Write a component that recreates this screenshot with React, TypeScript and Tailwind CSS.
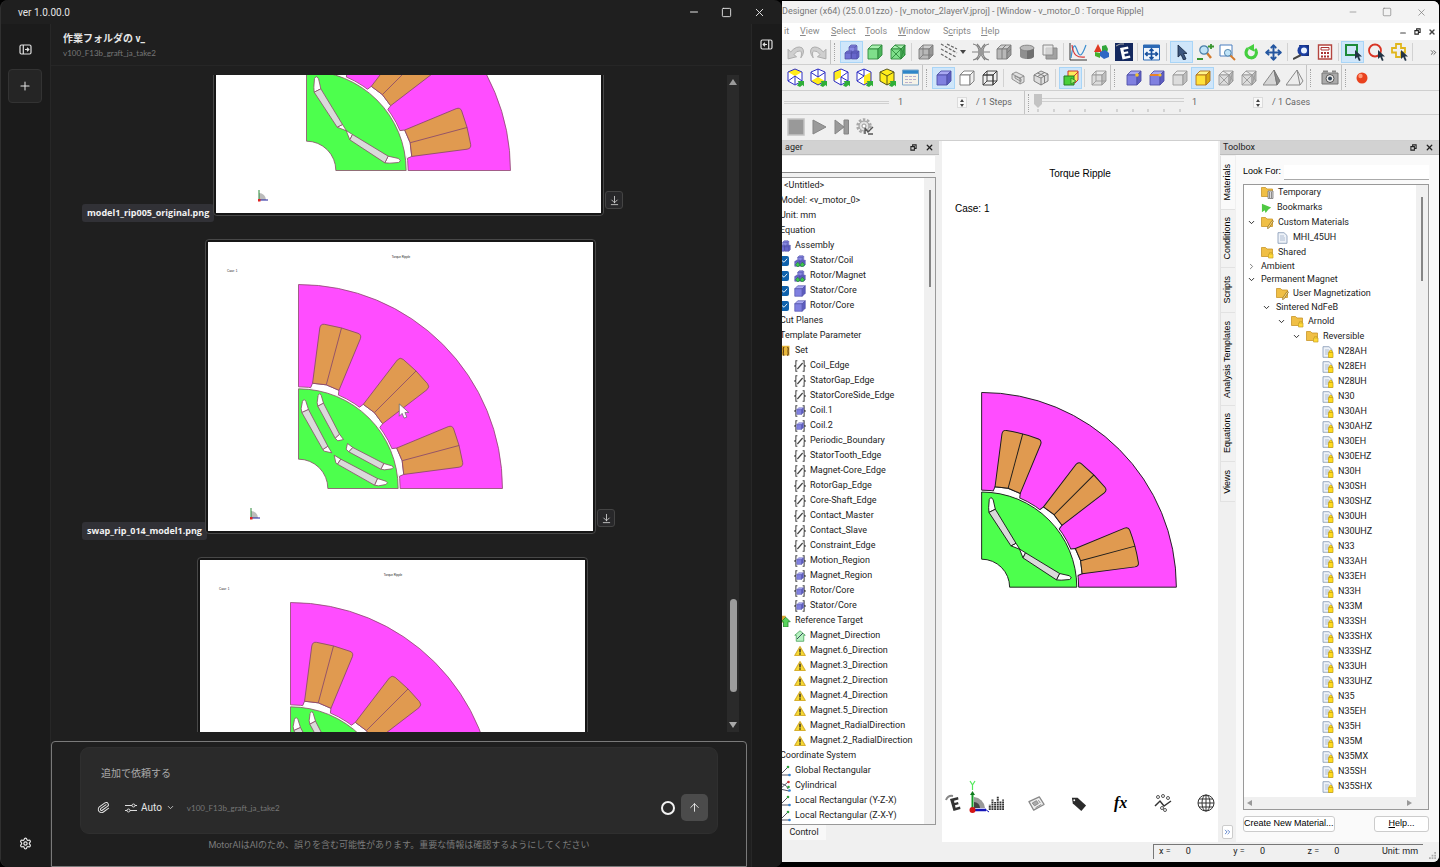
import React from "react";
import {
  ArrowDownToLine,
  ArrowUp,
  ChevronDown,
  ChevronRight,
  ChevronsRight,
  Minus,
  Move,
  Paperclip,
  Plus,
  Settings,
  Square,
  X,
} from "lucide-react";

type Kids = { children?: React.ReactNode };

/* ---------- motor cross section ---------- */

const SLOT_ANGLES = [-15, -45, -75];

const SINGLE_LAYER = [
  { magnet: "23,-235 43,-245 108,-138 92,-130", top: "23,-235 22,-250 24,-276 29,-282 36,-276 43,-245", tip: "108,-138 120,-119 92,-130" },
];

const DOUBLE_LAYER = [
  { magnet: "10,-228 30,-237 88,-127 73,-117", top: "10,-228 8,-240 12,-262 17,-267 22,-262 30,-237", tip: "88,-127 100,-107 77,-112 73,-117" },
  { magnet: "58,-247 75,-256 123,-163 110,-151", top: "58,-247 56,-258 59,-280 64,-285 68,-280 75,-256", tip: "123,-163 135,-147 118,-143 110,-151" },
];

function Motor({ double = false, line, weight = 3 }: { double?: boolean; line: string; weight?: number }) {
  const layers = double ? DOUBLE_LAYER : SINGLE_LAYER;
  const thin = { stroke: line, strokeWidth: weight, strokeLinejoin: "round" as const };
  return (
    <g>
      <path d="M0-612A612 612 0 0 1 612 0H305A305 305 0 0 0 0-305Z" fill="#ff4dff" {...thin} />
      {SLOT_ANGLES.map((a) => (
        <g key={a} transform={`rotate(${a})`}>
          <path d="M300-43L316-41L322 0L316 41L300 43Z" fill="#fff" />
          <path d="M302-43L316-41L322 0L316 41L302 43" fill="none" {...thin} />
          <path d="M316-41L482-63Q495-64 496-52A499 499 0 0 1 496 52Q495 64 482 63L316 41L322 0Z" fill="#e09a50" {...thin} />
          <path d="M322 0H499" {...thin} />
        </g>
      ))}
      <path d="M0-299A299 299 0 0 1 299 0H88A88 88 0 0 0 0-88Z" fill="#4dff4d" {...thin} />
      {["", "matrix(0 -1 -1 0 0 0)"].map((t) => (
        <g key={t} transform={t || undefined} {...thin}>
          {layers.map((l) => (
            <g key={l.magnet}>
              <polygon points={l.top} fill="#fff" />
              <polygon points={l.tip} fill="#fff" />
              <polygon points={l.magnet} fill="#dadada" />
            </g>
          ))}
        </g>
      ))}
    </g>
  );
}

function Plot({ double = false, captions = true }: { double?: boolean; captions?: boolean }) {
  return (
    <svg viewBox="0 0 385 289" className="block h-[289px] w-[385px] bg-white" role="img" aria-label="Motor cross section">
      {captions && (
        <g fontSize="3" fill="#222" fontFamily="Liberation Sans">
          <text x="193" y="16" textAnchor="middle">Torque Ripple</text>
          <text x="19" y="30">Case: 1</text>
        </g>
      )}
      <g transform="translate(90.5 246.5) scale(.3333)">
        <Motor double={double} line="#8a4a6a" weight={2.4} />
      </g>
      <g transform="translate(43 276)">
        <path d="M0 0V-7A7 7 0 0 1 7 0Z" fill="#bbb" />
        <path d="M0 0V-10" stroke="#2c8a3a" />
        <path d="M0 0H9" stroke="#1c1c9c" />
        <rect x="-1" y="-1" width="2.5" height="2.5" fill="#d22" />
      </g>
    </svg>
  );
}

/* ---------- left window ---------- */

function ImageMessage({ name, labelClass, double, captions, children }: { name?: string; labelClass: string; double?: boolean; captions?: boolean } & Kids) {
  return (
    <li className="flex items-end">
      <div className={`${labelClass} flex h-[18px] shrink-0 items-center`}>
        {name && (
          <span className="h-[18px] rounded-[3px] bg-[#313136] px-[5px] font-['Open_Sans'] text-[9px] font-bold leading-[18px] whitespace-nowrap text-[#f2f2f2]">{name}</span>
        )}
      </div>
      <div className="relative mb-[6px] shrink-0 rounded-[4px] border border-[#484848] bg-[#161616] p-[2px]">
        <Plot double={double} captions={captions} />
        {children}
      </div>
      <button aria-label="Download image" className="mb-[13px] ml-px flex size-[18px] items-center justify-center rounded-[3px] border border-[#444] bg-[#28282a] text-[#ddd]">
        <ArrowDownToLine size={11} strokeWidth={1.75} />
      </button>
    </li>
  );
}

function ChatWindow() {
  return (
    <section className="flex h-full min-w-0 flex-col overflow-hidden rounded-lg border-l border-[#303030] bg-[#1f1f1f] text-[#e6e6e6]">
      <header className="flex h-6 shrink-0 items-center pr-4 pl-[17px]">
        <h1 className="grow text-[10px]">ver 1.0.00.0</h1>
        <div className="flex items-center gap-[21px]">
          <button aria-label="Minimize"><Minus size={12} /></button>
          <button aria-label="Maximize"><Square size={11} /></button>
          <button aria-label="Close"><X size={13} strokeWidth={1.75} /></button>
        </div>
      </header>
      <div className="flex min-h-0 grow">
        <nav className="flex w-[50px] shrink-0 flex-col items-center border-r border-[#272727] bg-[#1b1b1b] pr-px pb-[17px]">
          <button aria-label="Open left panel" className="mt-[20px]"><PanelIcon /></button>
          <button aria-label="New" className="mt-[14px] flex size-[34px] items-center justify-center rounded-[4px] border border-[#333] bg-[#252525]">
            <Plus size={14} strokeWidth={1.75} />
          </button>
          <button aria-label="Settings" className="mt-auto"><Settings size={13} strokeWidth={2.25} /></button>
        </nav>
        <main className="flex min-w-0 grow flex-col">
          <div className="h-[42px] shrink-0 border-b border-[#262626] pt-[7px] pl-3">
            <h2 className="text-[10px] leading-4 font-bold">作業フォルダの v_</h2>
            <p className="font-['Lato'] text-[8px] leading-[13px] text-[#777]">v100_F13b_graft_ja_take2</p>
          </div>
          <div className="mt-[9px] mr-[12px] mb-[9px] flex min-h-0 grow pl-[31px]">
            <ul className="-mt-[154px] flex min-w-0 grow flex-col gap-[17px] overflow-hidden [clip-path:inset(154px_0_0_0)]">
              <ImageMessage name="model1_rip005_original.png" labelClass="w-[131px]" captions={false} />
              <ImageMessage name="swap_rip_014_model1.png" labelClass="w-[123px]" double>
                <svg viewBox="0 0 12 18" className="absolute top-[163px] left-[192px] h-[17px] w-[12px]">
                  <path d="M1 1V14L4 11L6 16L9 15L7 10H11Z" fill="#fff" stroke="#666" strokeWidth=".8" />
                </svg>
              </ImageMessage>
              <ImageMessage labelClass="w-[115px]" double />
            </ul>
            <div className="flex w-[12px] shrink-0 flex-col items-center bg-[#2a2a2a] py-[4px]">
              <svg viewBox="0 0 8 6" className="h-[6px] w-2"><path d="M4 0L8 6H0Z" fill="#9a9a9a" /></svg>
              <div className="grow-[514]" />
              <div className="w-[7px] grow-[93] rounded-full bg-[#9c9c9c]" />
              <div className="grow-[30]" />
              <svg viewBox="0 0 8 6" className="h-[6px] w-2"><path d="M4 6L8 0H0Z" fill="#aaa" /></svg>
            </div>
          </div>
          <form className="mr-[4px] flex h-[126px] shrink-0 flex-col rounded-t-[4px] border border-[#7a7a7a] pt-[5px] pr-[28px] pl-[28px]">
            <div className="flex h-[87px] flex-col rounded-[9px] border border-[#2f2f2f] bg-[#2a2a2a] pr-[9px] pl-[15px]">
              <input aria-label="追加で依頼する" placeholder="追加で依頼する" className="mt-[16px] ml-[5px] h-[18px] bg-transparent text-[10px] outline-none placeholder:text-[#aaa]" />
              <div className="mt-[12px] flex items-center">
                <button type="button" aria-label="Attach" className="ml-px"><Paperclip size={13} strokeWidth={1.75} className="rotate-[10deg]" /></button>
                <button type="button" className="ml-[15px] flex items-center text-[10px]">
                  <svg viewBox="0 0 12 10" className="mr-[4px] h-[10px] w-[12px]" fill="none" stroke="#ddd" strokeWidth="1">
                    <path d="M0 2.5H7M10 2.5H12M0 7.5H2M5 7.5H12" /><circle cx="8.5" cy="2.5" r="1.5" /><circle cx="3.5" cy="7.5" r="1.5" />
                  </svg>
                  Auto
                  <ChevronDown size={9} className="ml-[4px]" />
                </button>
                <span className="ml-[12px] font-['Lato'] text-[8px] text-[#777]">v100_F13b_graft_ja_take2</span>
                <span className="ml-auto size-[14px] rounded-full border-2 border-[#f2f2f2]" />
                <button aria-label="Send" className="ml-[6px] flex size-[27px] items-center justify-center rounded-[5px] bg-[#4b4b4b]"><ArrowUp size={13} strokeWidth={1.75} /></button>
              </div>
            </div>
            <p className="mt-[3px] text-center text-[9px] leading-4 text-[#7c7c7c]">MotorAIはAIのため、誤りを含む可能性があります。重要な情報は確認するようにしてください</p>
          </form>
        </main>
        <aside className="flex w-[31px] shrink-0 justify-center border-l border-[#272727] bg-[#1b1b1b] pt-[15px] pr-px">
          <button aria-label="Open right panel" className="h-fit"><PanelIcon flip /></button>
        </aside>
      </div>
    </section>
  );
}

function PanelIcon({ flip = false }: { flip?: boolean }) {
  return (
    <svg viewBox="0 0 13 11" className={`h-[11px] w-[13px] ${flip ? "-scale-x-100" : ""}`} fill="none" stroke="#e0e0e0" strokeWidth="1.2">
      <rect x="1" y="1" width="11" height="9" rx="1.5" />
      <path d="M4.3 1V10M6 5.500H9.500M8 3.800L9.800 5.500L8 7.200" />
    </svg>
  );
}

/* ---------- simulator icons ---------- */

function Svg({ children, s = 16, className = "size-4" }: { s?: number; className?: string } & Kids) {
  return <svg viewBox={`0 0 ${s} ${s}`} className={`${className} shrink-0`} fill="none">{children}</svg>;
}

function CubeShape({ top, front, side, line, wire, mesh }: { top: string; front: string; side: string; line: string; wire?: boolean; mesh?: boolean }) {
  return (
    <g stroke={line} strokeWidth=".9" strokeLinejoin="round">
      <path d="M1 5L5 1H15L11 5Z" fill={top} />
      <path d="M1 5H11V15H1Z" fill={front} />
      <path d="M11 5L15 1V11L11 15Z" fill={side} />
      {wire && <path d="M5 1V11H15M5 11L1 15" />}
      {mesh && <path d="M1 5L11 15M11 5L1 15M11 5L15 11M11 15L15 1M5 1L11 5" />}
    </g>
  );
}

const palette = {
  blue: { top: "#a9a9f2", front: "#8080e0", side: "#5c5cc0", line: "#5050a8" },
  green: { top: "#a9efb0", front: "#7fdf8b", side: "#4cb45b", line: "#2f8a3d" },
  grey: { top: "#cfcfcf", front: "#b8b8b8", side: "#989898", line: "#7c7c7c" },
  pale: { top: "#ececec", front: "#dcdcdc", side: "#bebebe", line: "#999" },
  clear: { top: "#fff", front: "#fff", side: "#eee", line: "#777" },
  wire: { top: "none", front: "none", side: "none", line: "#333" },
  yellow: { top: "#fff58a", front: "#ffe23a", side: "#d9aa10", line: "#b0701c" },
};

function Cube({ tone, wire, mesh, children }: { tone: keyof typeof palette; wire?: boolean; mesh?: boolean } & Kids) {
  return <Svg><CubeShape {...palette[tone]} wire={wire} mesh={mesh} />{children}</Svg>;
}

function Assembly({ className = "size-4", green = false }: { className?: string; green?: boolean }) {
  return (
    <Svg className={className}>
      <g stroke="#4a4aa2" strokeWidth=".7" strokeLinejoin="round">
        <path d="M5 3L7 1H12L13 2V7L11 9H5Z" fill="#8888e2" />
        <path d="M5 3H11L13 1.500M11 3V9" />
        <path d="M1 9L3 7H8V13L6.500 15H1Z" fill="#7373d6" />
        <path d="M1 9H7V15M7 9L8 7.500" />
        <path d="M7.500 9L9.500 7H15V13L13 15H7.500Z" fill="#6666cb" />
        <path d="M7.500 9H13V15M13 9L15 7" />
      </g>
      {green && <path d="M2 13L5 9.500L8 13L11 9.500L14.500 13L11 16L8 13.500L5 16Z" fill="#3cc44f" stroke="#1a7527" strokeWidth=".7" />}
    </Svg>
  );
}

const HEX_FACES = {
  top: { fill: "M9 1L16 4L9 8L2 4Z", hidden: "M9 16V8M9 8L2 13M9 8L16 13" },
  bottom: { fill: "M9 9L16 13L9 17L2 13Z", hidden: "M9 1V9M9 9L2 4.500M9 9L16 4.500" },
  left: { fill: "M2 4L9 1V9L2 13Z", hidden: "M9 9L16 4M9 9L16 13M9 9V17" },
  right: { fill: "M9 8L16 4V13L9 17Z", hidden: "M9 1V8M2 4L9 8L2 13" },
  all: { fill: "M9 1L16 4V13L9 17L2 13V4Z", hidden: "M2 4L9 8L16 4M9 8V17" },
};

function HexCube({ face }: { face: keyof typeof HEX_FACES }) {
  const { fill, hidden } = HEX_FACES[face];
  return (
    <Svg s={19} className="size-[19px]">
      <path d="M9 1L16 4V13L9 17L2 13V4Z" fill="#fff" />
      <path d={fill} fill="#ffec1a" />
      <path d={`M9 1L16 4V13L9 17L2 13V4Z${hidden}`} stroke={face === "all" ? "#55551c" : "#2c2cc4"} strokeWidth="1" />
      <path d="M11 17.500L13 14.500L11.500 13H18V18.500L16.500 17L14 19Z" fill="#2fae38" />
    </Svg>
  );
}

function Tool({ label, on = false, children }: { label: string; on?: boolean } & Kids) {
  return (
    <button aria-label={label} className={`flex h-[22px] w-[23px] shrink-0 items-center justify-center border ${on ? "border-[#a9d5f7] bg-[#cfe6fa]" : "border-transparent"}`}>
      {children}
    </button>
  );
}

function Sep({ wide = false }: { wide?: boolean }) {
  return (
    <div className={`flex h-[18px] shrink-0 justify-center ${wide ? "w-[7px]" : "w-[5px]"}`}>
      <div className="w-px bg-[#d2d2d2]" />
    </div>
  );
}

function Handle({ className = "w-[10px]" }: { className?: string }) {
  return (
    <div className={`${className} flex h-full shrink-0 items-center border-l border-[#c4c4c4] pl-[3px]`}>
      <div className="h-[18px] border-l border-dotted border-[#a4a4a4]" />
    </div>
  );
}

function Row({ children, className = "h-[25px]" }: { className?: string } & Kids) {
  return <div role="toolbar" className={`${className} flex shrink-0 items-center overflow-hidden border-b border-[#cfcfcf] pl-[2px]`}>{children}</div>;
}

function Spinner({ label }: { label: string }) {
  return (
    <button aria-label={label} className="flex h-[11px] w-[10px] shrink-0 items-center justify-center border border-[#dcdcdc] bg-[#f8f8f8]">
      <svg viewBox="0 0 6 8" className="h-2 w-[6px]"><path d="M3 0L5 3H1ZM3 8L5 5H1Z" fill="#444" /></svg>
    </button>
  );
}

function Lens({ x = 6, y = 6 }: { x?: number; y?: number }) {
  return (
    <g>
      <path d={`M${x + 3} ${y + 3}L15 15`} stroke="#d37a2c" strokeWidth="2.4" />
      <circle cx={x} cy={y} r="4.200" fill="#bfe3f8" stroke="#4b7fa8" strokeWidth="1.2" />
    </g>
  );
}

const ARROW = "M0 0V9L2.200 7L4 11L5.600 10.300L4 6.500H7Z";

const Swoop = ({ flip = false }: { flip?: boolean }) => (
  <Svg className={`size-[17px] ${flip ? "-scale-x-100" : ""}`}>
    <path d="M1 5V14L9 12L6.500 10Q9 6 12.500 6.500Q14.500 7.500 13 13Q17.500 7 14 3.500Q9 1 3.500 7.500Z" fill="#cfcfcf" stroke="#aaa" strokeWidth=".9" strokeLinejoin="round" />
  </Svg>
);

function ToolbarOne() {
  return (
    <Row>
      <Tool label="Undo"><Swoop /></Tool>
      <Tool label="Redo"><Swoop flip /></Tool>
      <Handle />
      <Tool label="Assembly" on><Assembly /></Tool>
      <Tool label="Part"><Cube tone="green" /></Tool>
      <Tool label="Mesh"><Cube tone="green" mesh /></Tool>
      <Sep />
      <Tool label="Solid"><Cube tone="grey" wire /></Tool>
      <Tool label="Edges"><Svg s={18} className="size-[18px]"><path d="M1 1L17 10M1 6L16 14M7 1L17 6M1 11L11 17" stroke="#666" strokeWidth="1.200" strokeDasharray="3 1.500" /></Svg></Tool>
      <button aria-label="More edges" className="w-[9px] shrink-0"><svg viewBox="0 0 6 4" className="h-1 w-[6px]"><path d="M0 0H6L3 4Z" fill="#444" /></svg></button>
      <Tool label="Flux"><Svg s={18} className="size-[18px]"><path d="M1 1Q7 2 7 9T1 17M17 1Q11 2 11 9T17 17M5 1Q9 5 9 9T5 17M13 1Q9 5 9 9T13 17M0 9H6M12 9H18" stroke="#808080" strokeWidth="1.200" /><path d="M6 6H12V12H6Z" fill="#999" /></Svg></Tool>
      <Tool label="Section"><Cube tone="grey"><path d="M6 5V15M6 5L10 1M11 9L15 5" stroke="#7c7c7c" /></Cube></Tool>
      <Tool label="Cylinder"><Svg><path d="M1 4V12C1 16 15 16 15 12V4Z" fill="#8f8f8f" /><ellipse cx="8" cy="4" rx="7" ry="2.800" fill="#bbb" stroke="#888" /><path d="M8 7V15C12 15 15 14 15 12V5Z" fill="#707070" /></Svg></Tool>
      <Tool label="Overlap"><Svg><path d="M4 4H15V15H4Z" fill="#a2a2a2" stroke="#8a8a8a" /><path d="M1 1H11V11H1Z" fill="#e8e8e8" fillOpacity=".7" stroke="#8a8a8a" /></Svg></Tool>
      <Sep />
      <Tool label="Graph"><Svg s={18} className="size-[18px]"><path d="M1 0V17H18" stroke="#333" /><path d="M2 15C4 0 6 1 8 7S12 16 17 2" stroke="#3c8fd0" strokeWidth="1.200" /><path d="M3 2C4 12 8 15 16 14" stroke="#d83b3b" strokeWidth="1.200" /></Svg></Tool>
      <Tool label="Shapes"><Svg><path d="M5 0L9 8H1Z" fill="#e03a22" /><path d="M9 2L13 1L15 5L14 9L9 8Z" fill="#30a53a" /><path d="M7 8L12 6L16 9V13L11 15L7 12Z" fill="#2e66c4" /><path d="M2 8L7 9V14L2 12Z" fill="#46b02d" /></Svg></Tool>
      <Tool label="E"><Svg s={18} className="size-[18px]"><path d="M0 0H18V18H0Z" fill="#13285e" /><path d="M5 5L13 3.500L13.500 5.800L8.500 6.800L9 9L13 8.200L13.400 10.300L9.400 11.100L9.900 13.600L15 12.500L15.400 14.800L7.500 16.400Z" fill="#fff" /><path d="M1 3Q5 0 9 1" stroke="#aaa" /></Svg></Tool>
      <Sep />
      <Tool label="Fit"><Svg s={17} className="size-[17px]"><path d="M.5 1H16.500V16H.5Z" fill="#eef5fd" stroke="#2d6ab5" /><path d="M1 2.500H16" stroke="#2d6ab5" strokeWidth="3" /><path d="M8.500 5V15M2.500 10H14.500M6.500 7L8.500 5L10.500 7M6.500 13L8.500 15L10.500 13M4.500 8L2.500 10L4.500 12M12.500 8L14.500 10L12.500 12" stroke="#174f9c" strokeWidth="1.600" /></Svg></Tool>
      <Sep wide />
      <Tool label="Pointer" on><Svg><path d="M4 1V13L7 10.500L9.500 16L12 15L9.500 9.500H13Z" fill="#3c567e" stroke="#14243e" strokeWidth=".8" /></Svg></Tool>
      <Tool label="Zoom"><Svg s={18} className="size-[18px]"><Lens x={8} y={7} /><path d="M1 16H7M12 3.500H18M15 1V6" stroke="#39962f" strokeWidth="1.800" /></Svg></Tool>
      <Tool label="Zoom area"><Svg s={17} className="size-[17px]"><path d="M1 1H13V12H1Z" fill="#fff" stroke="#4b7fc0" /><g transform="translate(4 4) scale(.8)"><Lens /></g></Svg></Tool>
      <Tool label="Rotate"><Svg><path d="M5 4.500A5.200 5.200 0 1 0 12 5" stroke="#45cf3f" strokeWidth="3.200" /><path d="M4 4L11 0V7.500Z" fill="#45cf3f" /></Svg></Tool>
      <Tool label="Pan"><Move size={17} color="#2456a0" strokeWidth={2.75} /></Tool>
      <Sep />
      <Tool label="Look at"><Svg s={17} className="size-[17px]"><path d="M6 1H16V12H9Z" fill="#16307c" /><circle cx="10" cy="6.500" r="5.500" fill="#1c3fa2" /><circle cx="11" cy="6.500" r="3" fill="#e8f2ff" /><path d="M0 15L8 11" stroke="#444" strokeWidth="2" /></Svg></Tool>
      <Tool label="Calculator"><Svg><path d="M1.500 1H14.500V15H1.500Z" fill="#fff" stroke="#b4453f" strokeWidth="1.400" /><path d="M4 3.500H12V6H4Z" stroke="#a33" /><path d="M4 9H12M4 12.500H12" stroke="#a33" strokeWidth="1.800" strokeDasharray="2 1" /></Svg></Tool>
      <Sep />
      <Tool label="Select box" on><Svg s={18} className="size-[18px]"><path d="M2 2H13V12H2Z" stroke="#1e8a3a" strokeWidth="2" /><path transform="translate(11 7)" d={ARROW} fill="#234" /></Svg></Tool>
      <Tool label="Select circle"><Svg s={18} className="size-[18px]"><circle cx="8" cy="7.500" r="6" stroke="#d83424" strokeWidth="1.800" /><path transform="translate(11 7)" d={ARROW} fill="#234" /></Svg></Tool>
      <Tool label="Select polygon"><Svg s={18} className="size-[18px]"><path d="M6 1H11V5H15V9.500H11V14H6V9.500H2V5H6Z" stroke="#e0b61c" strokeWidth="1.800" /><path transform="translate(11 7)" d={ARROW} fill="#234" /></Svg></Tool>
      <Sep />
      <button aria-label="More tools" className="mr-px ml-auto"><ChevronsRight size={9} color="#333" /></button>
    </Row>
  );
}

function ToolbarTwo() {
  return (
    <Row className="h-[26px]">
      <Tool label="View top"><HexCube face="top" /></Tool>
      <Tool label="View bottom"><HexCube face="bottom" /></Tool>
      <Tool label="View left"><HexCube face="left" /></Tool>
      <Tool label="View right"><HexCube face="right" /></Tool>
      <Tool label="View isometric"><HexCube face="all" /></Tool>
      <Tool label="View list"><Svg s={17} className="size-[17px]"><path d="M.5 1H16.500V16H.5Z" fill="#f6f3e8" stroke="#7ea6c8" /><path d="M1 3H16" stroke="#2f86c8" strokeWidth="3.500" /><path d="M3 7.500H14M3 10.500H14M3 13.500H10" stroke="#b9b0cf" strokeDasharray="3 1" /></Svg></Tool>
      <Handle />
      <Tool label="Shaded" on><Cube tone="blue" /></Tool>
      <Tool label="Hidden line"><Cube tone="clear" /></Tool>
      <Tool label="Wireframe"><Cube tone="wire" wire /></Tool>
      <Sep />
      <Tool label="Plane"><Svg><path d="M2 4L6 2L14 6V12L10 14L2 9ZM5 6L11 9V11.500L5 8ZM10 14V8L14 6M2 4L10 8" fill="#e0e0e0" stroke="#888" strokeWidth=".9" /></Svg></Tool>
      <Tool label="Planes"><Svg><path d="M1 5L8 1L15 4V11L8 15L1 11ZM1 5L8 8L15 4M8 8V15M4.500 3L11.500 6V13M4.500 6.500L11.500 2.500" fill="#ddd" stroke="#777" strokeWidth=".9" /></Svg></Tool>
      <Sep wide />
      <Tool label="Clip" on><Svg><path d="M5 1H15V10L12 13H5Z" fill="#ffe95a" stroke="#c33" /><path d="M1 6H11V15H1Z" fill="#49cf3a" stroke="#267a20" /><path d="M11 6L15 2" stroke="#c33" /><path d="M8 8L13 11L8 14Z" fill="#9bf06b" stroke="#267a20" strokeWidth=".7" /></Svg></Tool>
      <Sep />
      <Tool label="Transparent"><Cube tone="pale" wire /></Tool>
      <Handle className="w-[12px]" />
      <Tool label="Vertex"><Cube tone="blue"><circle cx="11" cy="5" r="1.800" fill="#f2c22c" /></Cube></Tool>
      <Tool label="Edge"><Cube tone="blue"><path d="M1 5H11" stroke="#e8822c" strokeWidth="2" /><circle cx="11" cy="5" r="1.600" fill="#f2c22c" /></Cube></Tool>
      <Tool label="Face"><Cube tone="pale" /></Tool>
      <Tool label="Body" on><Cube tone="yellow" /></Tool>
      <Tool label="Element"><Cube tone="pale" mesh /></Tool>
      <Tool label="Node"><Cube tone="pale" mesh /></Tool>
      <Tool label="Element face"><Svg s={18} className="size-[18px]"><path d="M11 1L14 16H0Z" fill="#d6d6d6" stroke="#888" strokeLinejoin="round" /><path d="M11 1L17 12L14 16Z" fill="#8a8a8a" stroke="#777" strokeLinejoin="round" /></Svg></Tool>
      <Tool label="Element edge"><Svg s={18} className="size-[18px]"><path d="M11 1L17 12L14 16H0ZM11 1L14 16" fill="#ececec" stroke="#888" strokeLinejoin="round" /></Svg></Tool>
      <Handle className="w-[12px]" />
      <Tool label="Capture"><Svg s={18} className="size-[18px]"><path d="M1 4H17V15H1Z" fill="#aaa" stroke="#777" /><path d="M2 2.500H7M11 2.500H15" stroke="#888" strokeWidth="2" /><circle cx="9" cy="9.500" r="4" fill="#eee" stroke="#555" /><circle cx="9" cy="9.500" r="2" fill="#345" /></Svg></Tool>
      <Handle className="w-[9px]" />
      <Tool label="Record"><Svg s={12} className="size-3"><circle cx="6" cy="6" r="5.500" fill="#e9421e" /><circle cx="4.500" cy="4" r="2.200" fill="#ff9a78" /></Svg></Tool>
    </Row>
  );
}

function StepBar() {
  return (
    <Row className="h-[24px] text-[9px] text-[#666]">
      <div className="h-[3px] w-[105px] shrink-0 border-y border-[#d0d0d0]" />
      <span className="ml-[9px] w-[59px] shrink-0">1</span>
      <Spinner label="Step" />
      <span className="ml-[9px] w-[48px] shrink-0 whitespace-nowrap">/ 1 Steps</span>
      <Handle className="w-[10px]" />
      <svg viewBox="0 0 150 22" className="h-[22px] w-[150px] shrink-0" fill="none">
        <path d="M4 6.500H150M4 9.500H150" stroke="#d0d0d0" />
        <path d="M0 2H8V12L4 16L0 12Z" fill="#c3c3c3" />
        <path d="M4 17V20M20 17V20M36 17V20M51 17V20M67 17V20M83 17V20M99 17V20M114 17V20M130 17V20M146 17V20" stroke="#b5b5b5" />
      </svg>
      <span className="ml-[8px] w-[61px] shrink-0">1</span>
      <Spinner label="Case" />
      <span className="ml-[9px] shrink-0 whitespace-nowrap">/ 1 Cases</span>
    </Row>
  );
}

function RunBar() {
  return (
    <Row className="h-[26px] pb-[2px]">
      <Tool label="Stop"><Svg s={18} className="size-[18px]"><path d="M1 1H17V17H1Z" fill="#999" stroke="#c2c2c2" strokeWidth="1.500" /></Svg></Tool>
      <Tool label="Play"><Svg><path d="M2 1L15 8L2 15Z" fill="#9a9a9a" stroke="#858585" /></Svg></Tool>
      <Tool label="Skip"><Svg><path d="M1 1L10 8L1 15ZM10 1H14.500V15H10Z" fill="#9a9a9a" stroke="#858585" /></Svg></Tool>
      <Tool label="Run options"><Svg s={18} className="size-[18px]"><circle cx="8" cy="8" r="6.500" stroke="#aaa" strokeWidth="2.500" strokeDasharray="2.500 1.600" /><circle cx="8" cy="8" r="5" fill="#e2e2e2" stroke="#999" /><circle cx="8" cy="8" r="2" fill="#fff" stroke="#999" /><path d="M9 10L12 14L17 9M9 16V10M12 16H17" stroke="#555" strokeWidth="1.300" /></Svg></Tool>
    </Row>
  );
}

/* ---------- model tree ---------- */

function SetIcon({ region = false }: { region?: boolean }) {
  return (
    <Svg className="size-[12px]">
      <path d="M4.500 1H2.500V7L1 8L2.500 9V15H4.500M11.500 1H13.500V7L15 8L13.500 9V15H11.500" stroke="#444" strokeWidth="1.400" />
      {region ? <g transform="translate(3 3) scale(.64)"><CubeShape {...palette.blue} /></g> : <path d="M4.500 12L11.500 4" stroke="#444" strokeWidth="1.600" />}
    </Svg>
  );
}

const WarnIcon = () => (
  <Svg className="size-[12px]">
    <path d="M8 2L15 14H1Z" fill="#f7da32" stroke="#d8b030" strokeLinejoin="round" strokeWidth="1.500" />
    <path d="M8 5V10M8 11V13" stroke="#222" strokeWidth="1.800" />
  </Svg>
);

const DirIcon = () => (
  <Svg className="size-[12px]">
    <path d="M8 1L15 7H13V15H3V7H1Z" fill="#b6f2c0" stroke="#3f9a50" />
    <path d="M4 12L12 4" stroke="#345" strokeWidth="1.300" />
  </Svg>
);

const AxisIcon = () => (
  <Svg s={12} className="size-[12px]">
    <path d="M1 10L9 2M1 10H11" stroke="#556" /><circle cx="9" cy="2" r="1.300" fill="#2fa040" /><circle cx="10.500" cy="10" r="1.300" fill="#2f80d0" />
  </Svg>
);

const PolarIcon = () => (
  <Svg s={12} className="size-[12px]">
    <path d="M0 4Q7 3 9 9M1 9L9 2M1 9L10 11" stroke="#556" /><circle cx="9.500" cy="2" r="1.300" fill="#c33" /><circle cx="9.500" cy="7" r="1.300" fill="#2fa040" /><circle cx="10.500" cy="10.500" r="1.300" fill="#2f80d0" />
  </Svg>
);

type Item = { text: string; kind: string };
const items = (kind: string, ...texts: string[]): Item[] => texts.map((text) => ({ text, kind }));

const MODEL_TREE: Item[] = [
  ...items("first", "<Untitled>"),
  ...items("root", "Model: <v_motor_0>", "Unit: mm", "Equation"),
  ...items("assembly", "Assembly"),
  ...items("group", "Stator/Coil", "Rotor/Magnet"),
  ...items("part", "Stator/Core", "Rotor/Core"),
  ...items("root", "Cut Planes", "Template Parameter"),
  ...items("set", "Set"),
  ...items("edge", "Coil_Edge", "StatorGap_Edge", "StatorCoreSide_Edge"),
  ...items("region", "Coil.1", "Coil.2"),
  ...items("edge", "Periodic_Boundary", "StatorTooth_Edge", "Magnet-Core_Edge", "RotorGap_Edge", "Core-Shaft_Edge", "Contact_Master", "Contact_Slave", "Constraint_Edge"),
  ...items("region", "Motion_Region", "Magnet_Region", "Rotor/Core", "Stator/Core"),
  ...items("target", "Reference Target"),
  ...items("dir", "Magnet_Direction"),
  ...items("warn", "Magnet.6_Direction", "Magnet.3_Direction", "Magnet.2_Direction", "Magnet.4_Direction", "Magnet.5_Direction", "Magnet_RadialDirection", "Magnet.2_RadialDirection"),
  ...items("root", "Coordinate System"),
  ...items("axis", "Global Rectangular"),
  ...items("polar", "Cylindrical"),
  ...items("axis", "Local Rectangular (Y-Z-X)", "Local Rectangular (Z-X-Y)"),
];

const INDENT: Record<string, string> = {
  first: "pl-[2px]",
  root: "-ml-[2px]",
  assembly: "-ml-[3px]",
  set: "-ml-[3px]",
  target: "-ml-[3px]",
  axis: "-ml-[3px]",
  polar: "-ml-[3px]",
  edge: "pl-[12px]",
  region: "pl-[12px]",
  dir: "pl-[12px]",
  warn: "pl-[12px]",
};

function ModelRow({ text, kind }: Item) {
  if (kind === "group" || kind === "part") {
    return (
      <label className="flex items-center">
        <span className="relative -ml-[3px] flex size-[10px] shrink-0 items-center justify-center">
          <input type="checkbox" defaultChecked className="size-[10px] appearance-none rounded-[2px] bg-[#0f62ad]" />
          <svg viewBox="0 0 8 8" className="pointer-events-none absolute size-[7px]" fill="none"><path d="M1 4L3.500 6L7 2" stroke="#fff" /></svg>
        </span>
        <span className="mr-[4px] ml-[5px] flex">{kind === "group" ? <Assembly green className="size-[12px]" /> : <Svg className="size-[12px]"><CubeShape {...palette.blue} /></Svg>}</span>
        {text}
      </label>
    );
  }
  return (
    <div className={`flex items-center ${INDENT[kind]}`}>
      {kind !== "first" && kind !== "root" && (
        <span className="mr-[4px] flex shrink-0">
          {kind === "assembly" && <Assembly className="size-[12px]" />}
          {kind === "set" && <Svg className="size-[12px]"><path d="M1 1H14V14H1Z" fill="#e7b73b" /><path d="M7 3Q5 3 6 8Q5 13 7 14M11 3Q13 3 12 8Q13 13 11 14" stroke="#643f10" strokeWidth="1.500" /></Svg>}
          {kind === "target" && <Svg className="size-[12px]"><path d="M0 1H9V10H0Z" fill="#d9a836" /><path d="M9 3L15 9H12V16H6V9H3Z" fill="#58d35b" stroke="#23812b" /></Svg>}
          {kind === "edge" && <SetIcon />}
          {kind === "region" && <SetIcon region />}
          {kind === "dir" && <DirIcon />}
          {kind === "warn" && <WarnIcon />}
          {kind === "axis" && <AxisIcon />}
          {kind === "polar" && <PolarIcon />}
        </span>
      )}
      {text}
    </div>
  );
}

function DockTitle({ text }: { text: string }) {
  return (
    <div className="flex h-[14px] shrink-0 items-center border-b border-[#bdbdbd] bg-[#d2d2d2] pr-[5px] pl-[3px] text-[9px] text-[#222]">
      <span className="grow">{text}</span>
      <button aria-label={`Float ${text}`} className="mr-[8px]"><FloatIcon /></button>
      <button aria-label={`Close ${text}`}><X size={9} strokeWidth={3.500} /></button>
    </div>
  );
}

const FloatIcon = () => (
  <svg viewBox="0 0 8 8" className="size-[7px]" fill="none" stroke="#222" strokeWidth="1.200"><path d="M1 3H5V7H1ZM3 3V1H7V5H5" /></svg>
);

function ModelManager() {
  return (
    <section className="flex w-[157px] shrink-0 flex-col bg-[#f0f0f0]">
      <DockTitle text="ager" />
      <input aria-label="Filter model" className="mt-px mr-[4px] h-[17px] border-b border-[#8a8a8a] bg-white" />
      <div className="mt-[4px] mr-[3px] flex min-h-0 grow border-y border-r border-[#999] bg-white">
        <ul className="flex min-w-0 grow flex-col overflow-hidden text-[9px] whitespace-nowrap text-[#222]">
          {MODEL_TREE.map((item, i) => (
            <li key={i} className="flex min-h-0 flex-1 items-center"><ModelRow {...item} /></li>
          ))}
        </ul>
        <div className="w-[11px] shrink-0 bg-[#f0f0f0] pt-[12px] pl-[5px]"><div className="h-[97px] w-[2px] bg-[#858585]" /></div>
      </div>
      <div className="flex h-[17px] shrink-0"><button className="h-[15px] w-[44px] bg-[#f8f8f8] text-[9px] text-[#222]">Control</button></div>
    </section>
  );
}

/* ---------- canvas ---------- */

function Canvas() {
  return (
    <section className="ml-[3px] flex min-w-0 grow flex-col bg-white font-['Liberation_Sans'] text-[10px] text-black">
      <h3 className="mt-[26px] text-center leading-[14px]">Torque Ripple</h3>
      <p className="mt-[21px] pl-[13px] leading-[14px]">Case: 1</p>
      <svg viewBox="-2 -616 616 618" className="mt-[175px] ml-[39px] block h-[197px] w-[196px]"><Motor line="#1c1c1c" /></svg>
      <div className="relative mt-auto mb-[29px] flex h-[20px] items-center justify-between pr-[3px] pl-[3px]">
        <button aria-label="E view"><Svg s={18} className="size-[18px]"><path d="M5 5L13 3L13.500 5.500L9 6.700L9.500 9L13 8L13.600 10.300L10 11.300L10.600 13.700L15 12.500L15.500 15L8.500 17Z" fill="#333" /><path d="M1 6Q3 1 8 2" stroke="#888" strokeWidth="2" /></Svg></button>
        <button aria-label="Histogram" className="ml-[8px]"><Svg s={18} className="size-[16px]"><path d="M2 17V11M5 17V5M8 17V8M11 17V2M14 17V7M17 17V5" stroke="#333" strokeWidth="2.200" strokeDasharray="2 .6" /></Svg></button>
        <button aria-label="Notes"><Svg s={18} className="ml-[8px] size-[17px]"><path d="M1 7L12 2L17 10L6 16Z" fill="#eee" stroke="#888" strokeWidth="1.300" strokeLinejoin="round" /><path d="M4.500 8.500L9 6L11 9L7 11.500ZM11 5.500L13 8.500M8 13.500L14 10" fill="#aaa" stroke="#888" /></Svg></button>
        <button aria-label="Label"><Svg s={18} className="ml-[8px] size-[17px]"><path d="M2 3L8 3L17 11L12 17L3 9Z" fill="#2b2b2b" /><circle cx="4.500" cy="5.500" r="1" fill="#fff" /></Svg></button>
        <button aria-label="Function" className="ml-[8px] w-[18px] font-['Liberation_Serif'] text-[16px] leading-5 font-bold italic">fx</button>
        <button aria-label="Path"><Svg s={18} className="ml-[8px] size-[18px]"><path d="M1 12L6 7L10 12L17 7" stroke="#333" strokeWidth="1.500" /><g stroke="#555"><circle cx="4" cy="3" r="1.500" /><circle cx="9" cy="2" r="1.500" /><circle cx="14" cy="4" r="1.500" /><circle cx="8" cy="14" r="1.500" /><circle cx="11" cy="16" r="1.500" /></g></Svg></button>
        <button aria-label="Globe"><Svg s={18} className="ml-[8px] size-[18px]"><g stroke="#333"><circle cx="9" cy="9" r="8" /><ellipse cx="9" cy="9" rx="4" ry="8" /><path d="M9 1V17M1 9H17M2 5H16M2 13H16" /></g></Svg></button>
        <svg viewBox="0 0 24 36" className="absolute -bottom-[2px] left-[24px] h-[36px] w-[24px]" fill="none">
          <path d="M4 2L6.500 6V11M9 2L6.500 6" stroke="#54e85c" strokeWidth="1.200" />
          <path d="M8 29V18A12 12 0 0 1 19 29Z" fill="#999" /><path d="M8 29V23A6 6 0 0 1 14 29Z" fill="#444" />
          <path d="M6.500 31V15" stroke="#159a28" strokeWidth="2" /><path d="M6.500 12L9 16H4Z" fill="#117a1e" />
          <path d="M7 31H20" stroke="#1414b8" strokeWidth="2.500" /><path d="M19 30L23 33" stroke="#1414b8" />
          <circle cx="6.500" cy="31" r="3" fill="#d41515" />
        </svg>
      </div>
    </section>
  );
}

/* ---------- toolbox ---------- */

const GRADES = "N28AH N28EH N28UH N30 N30AH N30AHZ N30EH N30EHZ N30H N30SH N30SHZ N30UH N30UHZ N33 N33AH N33EH N33H N33M N33SH N33SHX N33SHZ N33UH N33UHZ N35 N35EH N35H N35M N35MX N35SH N35SHX".split(" ");

function Folder({ extra }: { extra?: "lock" | "pen" | "bin" }) {
  return (
    <Svg s={13} className="size-[13px]">
      <path d="M.5 1.500H4.500L6 3H11.500V10.500H.5Z" fill="#f0bf45" stroke="#c8952a" strokeWidth=".8" />
      {extra === "lock" && <path d="M7.500 8H12V12H7.500ZM8.500 8V6.500H11V8" fill="#ffd936" stroke="#c9a02a" strokeWidth=".7" />}
      {extra === "pen" && <path d="M12.500 5L8 12L6.500 12.500L6.800 10.800L11 4.500Z" fill="#ffe28a" stroke="#8a651a" strokeWidth=".7" />}
      {extra === "bin" && <path d="M7 5H12V12.500H7ZM8.500 6V12M10.500 6V12" fill="#ddd" stroke="#777" strokeWidth=".8" />}
    </Svg>
  );
}

function Doc({ lock = false }: { lock?: boolean }) {
  return (
    <Svg s={12} className="size-[12px]">
      <path d="M1 .7H7L10 3.500V11.300H1Z" fill="#eef2f8" stroke="#8295b2" strokeWidth=".8" />
      <path d="M3 4H7M3 6H8M3 8H8" stroke="#9fb0c8" strokeWidth=".8" />
      {lock && <path d="M6.500 6.500H11V11.500H6.500ZM7.300 6.500V5Q8.700 3 10.200 5V6.500" fill="#ffdb1f" stroke="#c29c14" strokeWidth=".7" />}
    </Svg>
  );
}

function Node({ pad, icon, open, tight = false, children }: { pad: string; icon?: React.ReactNode; open?: boolean; tight?: boolean } & Kids) {
  return (
    <li className={`${pad} ${tight ? "h-[13px]" : "h-[15px]"} flex shrink-0 items-center`}>
      <span className="mr-[5px] flex w-[9px] shrink-0">
        {open === true && <ChevronDown size={9} strokeWidth={2.500} />}
        {open === false && <ChevronRight size={9} strokeWidth={2.500} color="#777" />}
      </span>
      {icon && <span className="mr-[4px] flex shrink-0">{icon}</span>}
      {children}
    </li>
  );
}

function VTab({ text, className, on = false }: { text: string; className: string; on?: boolean }) {
  return (
    <button className={`${className} flex w-[15px] shrink-0 items-center justify-center border-b border-l border-[#e2e2e2] text-[9px] text-black ${on ? "bg-[#fafafa]" : "bg-[#f2f2f2]"}`}>
      <span className="rotate-180 whitespace-nowrap [writing-mode:vertical-rl]">{text}</span>
    </button>
  );
}

function Toolbox() {
  return (
    <section className="ml-[2px] flex w-[219px] shrink-0 flex-col bg-[#fafafa]">
      <DockTitle text="Toolbox" />
      <div className="flex min-h-0 grow">
        <div className="flex w-[16px] shrink-0 flex-col bg-[#f0f0f0] pt-px font-['Liberation_Sans']">
          <VTab text="Materials" className="h-[54px]" on />
          <VTab text="Conditions" className="h-[58px]" />
          <VTab text="Scripts" className="h-[45px]" />
          <VTab text="Analysis Templates" className="h-[93px]" />
          <VTab text="Equations" className="h-[56px]" />
          <VTab text="Views" className="h-[40px]" />
          <button aria-label="More tabs" className="mt-auto mb-[3px] ml-[2px] flex h-[14px] w-[11px] items-center justify-center rounded-[2px] border border-[#ccc] bg-white"><ChevronsRight size={10} color="#3a68c0" /></button>
        </div>
        <div className="flex min-w-0 grow flex-col pr-[10px] pb-[10px] pl-[7px]">
          <label className="mt-[9px] flex h-[16px] items-center font-['Liberation_Sans'] text-[9px] whitespace-nowrap">
            <span className="w-[41px]">Look For:</span>
            <input className="h-[15px] min-w-0 grow border-b border-[#aaa] bg-white" />
          </label>
          <div className="mt-[4px] flex min-h-0 grow flex-col border border-[#999] bg-white text-[9px] text-[#222]">
            <div className="flex min-h-0 grow">
              <ul className="flex min-w-0 grow flex-col overflow-hidden whitespace-nowrap">
                <Node pad="pl-[3px]" icon={<Folder extra="bin" />}>Temporary</Node>
                <Node pad="pl-[3px]" icon={<Svg s={13} className="size-[12px]"><path d="M1 2L11 6L8 8L5 12L4 9L1 11Z" fill="#4fc943" /></Svg>}>Bookmarks</Node>
                <Node pad="pl-[3px]" open icon={<Folder extra="pen" />}>Custom Materials</Node>
                <Node pad="pl-[19px]" icon={<Doc />}>MHI_45UH</Node>
                <Node pad="pl-[3px]" icon={<Folder extra="lock" />}>Shared</Node>
                <Node pad="pl-[3px]" open={false} tight>Ambient</Node>
                <Node pad="pl-[3px]" open tight>Permanent Magnet</Node>
                <Node pad="pl-[18px]" icon={<Folder extra="pen" />}>User Magnetization</Node>
                <Node pad="pl-[18px]" open tight>Sintered NdFeB</Node>
                <Node pad="pl-[33px]" open icon={<Folder extra="lock" />}>Arnold</Node>
                <Node pad="pl-[48px]" open icon={<Folder extra="lock" />}>Reversible</Node>
                {GRADES.map((g) => <Node key={g} pad="pl-[64px]" icon={<Doc lock />}>{g}</Node>)}
              </ul>
              <div className="w-[12px] shrink-0 bg-[#f0f0f0] pt-[12px] pl-[5px]"><div className="h-[84px] w-[2px] bg-[#858585]" /></div>
            </div>
            <div className="flex h-[12px] shrink-0 items-center justify-between bg-[#f0f0f0] pr-[16px] pl-[3px]">
              <svg viewBox="0 0 5 6" className="h-[6px] w-[5px]"><path d="M0 3L5 0V6Z" fill="#999" /></svg>
              <svg viewBox="0 0 5 6" className="h-[6px] w-[5px]"><path d="M5 3L0 0V6Z" fill="#999" /></svg>
            </div>
          </div>
          <div className="mt-[6px] flex h-[16px] shrink-0 justify-between font-['Liberation_Sans'] text-[9px]">
            <button className="rounded-[3px] border border-[#ccc] bg-white whitespace-nowrap">Create New Material...</button>
            <button className="w-[55px] rounded-[3px] border border-[#ccc] bg-white"><u>H</u>elp...</button>
          </div>
        </div>
      </div>
    </section>
  );
}

const MENU = [
  { text: "View", key: 0, width: "w-[31px]" },
  { text: "Select", key: 0, width: "w-[34px]" },
  { text: "Tools", key: 0, width: "w-[33px]" },
  { text: "Window", key: 0, width: "w-[45px]" },
  { text: "Scripts", key: 1, width: "w-[38px]" },
  { text: "Help", key: 0, width: "w-[30px]" },
];

function Simulator() {
  return (
    <section className="mt-px mr-px mb-[5px] flex min-w-0 flex-col overflow-hidden rounded-r-[6px] bg-[#f0f0f0]">
      <header className="flex h-[22px] shrink-0 items-center bg-[#f3f3f3] pr-[12px] text-[#777]">
        <h2 className="grow text-[9px] whitespace-nowrap">Designer (x64) (25.0.01zzo) - [v_motor_2layerV.jproj] - [Window - v_motor_0 : Torque Ripple]</h2>
        <div className="flex items-center gap-[24px]">
          <button aria-label="Minimize simulator"><Minus size={10} strokeWidth={1.500} /></button>
          <button aria-label="Maximize simulator"><Square size={10} strokeWidth={1.500} /></button>
          <button aria-label="Close simulator"><X size={11} strokeWidth={1.500} /></button>
        </div>
      </header>
      <nav className="flex h-[17px] shrink-0 items-center bg-white pr-[3px] text-[9px] text-[#888]">
        <span className="w-[18px] pl-[2px]">it</span>
        {MENU.map(({ text, key, width }) => (
          <button key={text} className={`${width} text-left`}>
            {text.slice(0, key)}<u>{text[key]}</u>{text.slice(key + 1)}
          </button>
        ))}
        <div className="ml-auto flex items-center gap-[7px] text-[#444]">
          <button aria-label="Minimize document"><Minus size={8} strokeWidth={3.500} className="mt-[3px]" /></button>
          <button aria-label="Restore document"><FloatIcon /></button>
          <button aria-label="Close document"><X size={8} strokeWidth={4} /></button>
        </div>
      </nav>
      <ToolbarOne />
      <ToolbarTwo />
      <StepBar />
      <RunBar />
      <div className="flex min-h-0 grow">
        <ModelManager />
        <Canvas />
        <Toolbox />
      </div>
      <footer className="flex h-[20px] shrink-0 justify-end bg-[#f0f0f0] pt-[2px] pr-[3px] text-[9px] text-[#222]">
        <dl className="flex h-[15px] w-[270px] items-center border-t border-l border-[#777] pl-[5px]">
          {["x", "y", "z"].map((axis) => (
            <React.Fragment key={axis}>
              <dt className="w-[27px]">{axis} =</dt>
              <dd className="w-[48px]">0</dd>
            </React.Fragment>
          ))}
          <dd className="ml-auto pr-[5px] whitespace-nowrap">Unit: mm</dd>
        </dl>
        <svg viewBox="0 0 8 8" className="mt-[8px] ml-[6px] size-[7px]"><path d="M6 0H8V2H6ZM3 3H5V5H3ZM6 3H8V5H6ZM0 6H2V8H0ZM3 6H5V8H3ZM6 6H8V8H6Z" fill="#aaa" /></svg>
      </footer>
    </section>
  );
}

export default function App() {
  return (
    <div className="grid h-screen grid-cols-[782fr_658fr] overflow-hidden bg-black font-['Roboto','Noto_Sans_CJK_JP',sans-serif]">
      <ChatWindow />
      <Simulator />
    </div>
  );
}
